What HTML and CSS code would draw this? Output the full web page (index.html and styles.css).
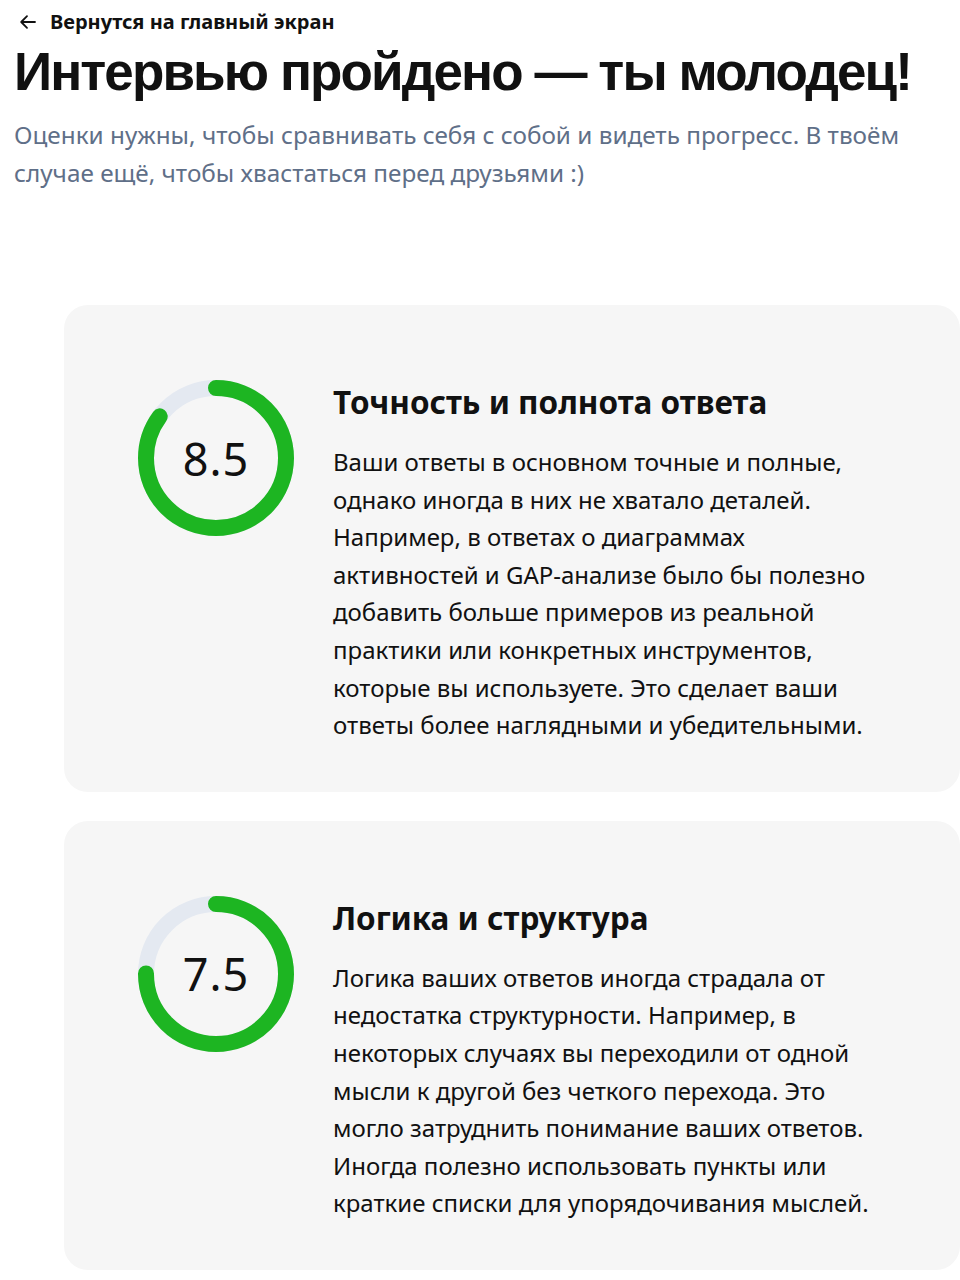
FILE: index.html
```html
<!DOCTYPE html>
<html lang="ru">
<head>
    <meta charset="UTF-8">
    <meta name="viewport" content="width=device-width, initial-scale=1.0">
    <title>Результаты интервью</title>
    <link rel="stylesheet" href="styles.css">
</head>
<body>
    <div class="page">
        <!-- шапка -->
        <a class="back-link" href="#">
            <svg class="back-icon" width="20" height="20" viewBox="0 0 20 20" fill="none">
                <path d="M17 10H3.5M9 4.2L3.2 10L9 15.8" stroke="#111" stroke-width="1.8" stroke-linecap="round" stroke-linejoin="round"/>
            </svg>
            Вернутся на главный экран
        </a>
        <h1 class="page-title">Интервью пройдено — ты молодец!</h1>
        <p class="page-lead">Оценки нужны, чтобы сравнивать себя с собой и видеть прогресс. В твоём случае ещё, чтобы хвастаться перед друзьями :)</p>

        <!-- оценки -->
        <div class="score-list">
            <div class="score-card">
                <div class="ring">
                    <svg width="156" height="156" viewBox="0 0 156 156">
                        <circle class="ring-track" cx="78" cy="78" r="70"/>
                        <circle class="ring-value" cx="78" cy="78" r="70" style="stroke-dasharray: 373.85 439.82"/>
                    </svg>
                    <span class="ring-number">8.5</span>
                </div>
                <div class="score-text">
                    <h2>Точность и полнота ответа</h2>
                    <p>Ваши ответы в основном точные и полные, однако иногда в них не хватало деталей. Например, в ответах о диаграммах активностей и GAP-анализе было бы полезно добавить больше примеров из реальной практики или конкретных инструментов, которые вы используете. Это сделает ваши ответы более наглядными и убедительными.</p>
                </div>
            </div>

            <div class="score-card">
                <div class="ring">
                    <svg width="156" height="156" viewBox="0 0 156 156">
                        <circle class="ring-track" cx="78" cy="78" r="70"/>
                        <circle class="ring-value" cx="78" cy="78" r="70" style="stroke-dasharray: 329.87 439.82"/>
                    </svg>
                    <span class="ring-number">7.5</span>
                </div>
                <div class="score-text">
                    <h2>Логика и структура</h2>
                    <p>Логика ваших ответов иногда страдала от недостатка структурности. Например, в некоторых случаях вы переходили от одной мысли к другой без четкого перехода. Это могло затруднить понимание ваших ответов. Иногда полезно использовать пункты или краткие списки для упорядочивания мыслей.</p>
                </div>
            </div>
        </div>
    </div>
</body>
</html>
```

FILE: styles.css
```css
* {
    margin: 0;
    padding: 0;
    box-sizing: border-box;
}

body {
    font-family: 'Noto Sans', 'Open Sans', sans-serif;
    background: #ffffff;
    color: #111111;
    overflow: hidden;
}

.page {
    padding: 10px 0 0 14px;
}

.back-link {
    display: inline-flex;
    align-items: center;
    gap: 12px;
    margin-left: 4px;
    font-size: 20px;
    font-weight: 700;
    color: #111111;
    text-decoration: none;
    line-height: 24px;
}

.page-title {
    font-family: 'Liberation Sans', Arial, sans-serif;
    font-size: 53px;
    font-weight: 700;
    line-height: 64px;
    letter-spacing: -1.9px;
    margin-top: 3px;
    white-space: nowrap;
}

.page-lead {
    margin-top: 12px;
    font-size: 24.3px;
    line-height: 38px;
    color: #5f6f88;
    max-width: 900px;
}

.score-list {
    margin-top: 113px;
    margin-left: 50px;
    display: flex;
    flex-direction: column;
    gap: 29px;
}

.score-card {
    display: flex;
    align-items: flex-start;
    gap: 39px;
    background: #f6f6f6;
    border-radius: 24px;
    padding: 75px 40px 48px 74px;
}

.ring {
    position: relative;
    width: 156px;
    height: 156px;
    flex-shrink: 0;
}

.ring svg {
    display: block;
    transform: rotate(-90deg);
}

.ring-track {
    fill: none;
    stroke: #e4e9f1;
    stroke-width: 16;
}

.ring-value {
    fill: none;
    stroke: #1db522;
    stroke-width: 16;
    stroke-linecap: round;
}

.ring-number {
    position: absolute;
    inset: 0;
    display: flex;
    align-items: center;
    justify-content: center;
    font-size: 45px;
    font-weight: 400;
    letter-spacing: 1px;
    color: #111111;
}

.score-text {
    width: 548px;
}

.score-text h2 {
    font-size: 31.5px;
    font-weight: 700;
    line-height: 40px;
    margin-top: 2px;
    margin-bottom: 21px;
}

.score-text p {
    font-size: 24px;
    line-height: 37.6px;
}
```
